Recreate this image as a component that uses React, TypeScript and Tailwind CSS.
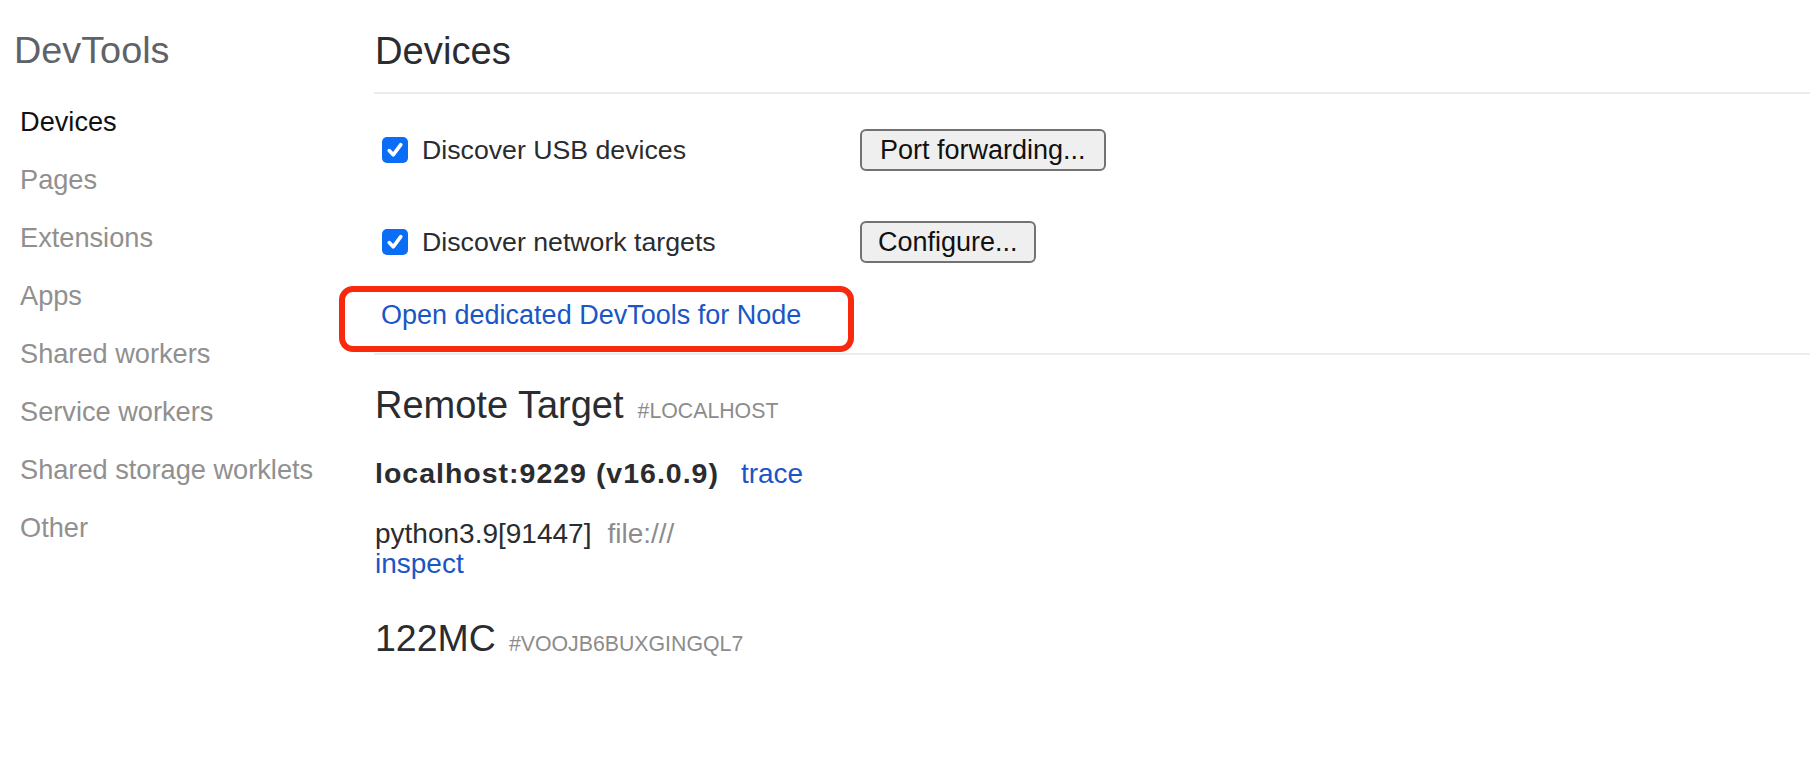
import React from "react";

function Check() {
  return (
    <span className="flex h-[26px] w-[26px] shrink-0 items-center justify-center rounded-[5px] bg-[#0b6cf5]">
      <svg width="26" height="26" viewBox="0 0 26 26" fill="none">
        <path d="M7.2 13.6 L11.2 17.8 L18.8 7.6" stroke="#ffffff" strokeWidth="3.6" strokeLinecap="round" strokeLinejoin="round" />
      </svg>
    </span>
  );
}

function Btn({ children, px }: { children: React.ReactNode; px: string }) {
  return (
    <button className={"flex h-[42px] items-center rounded-[6px] border-2 border-[#727272] bg-[#efefef] text-[27px] leading-none text-[#111111] " + px}>
      {children}
    </button>
  );
}

const sideItems = [
  "Devices",
  "Pages",
  "Extensions",
  "Apps",
  "Shared workers",
  "Service workers",
  "Shared storage worklets",
  "Other",
];

export default function App() {
  return (
    <div
      className="flex h-[774px] w-full overflow-hidden bg-white"
      style={{ fontFamily: '"Liberation Sans", Arial, sans-serif' }}
    >
      <aside className="w-[374px] shrink-0">
        <div className="ml-[14px] mt-[28px] text-[37.8px] leading-[44px] text-[#5f6368]">DevTools</div>
        <ul className="ml-[20px] mt-[21px]">
          {sideItems.map((s, i) => (
            <li
              key={s}
              className={
                "text-[27.2px] leading-[58px] " + (i === 0 ? "text-[#111111]" : "text-[#909090]")
              }
            >
              {s}
            </li>
          ))}
        </ul>
      </aside>

      <main className="flex-1">
        <div className="ml-[1px] mt-[29px] text-[38.2px] leading-[44px] text-[#2a2c2f]">Devices</div>
        <div className="mt-[19px] h-[2px] bg-[#ececec]" />

        <div className="mt-[35px] flex h-[42px] items-center">
          <div className="ml-[8px] flex w-[478px] items-center gap-[14px]">
            <Check />
            <span className="text-[26.7px] leading-none text-[#2a2c2f]">Discover USB devices</span>
          </div>
          <Btn px="px-[18px]">Port forwarding...</Btn>
        </div>

        <div className="mt-[50px] flex h-[42px] items-center">
          <div className="ml-[8px] flex w-[478px] items-center gap-[14px]">
            <Check />
            <span className="text-[26.7px] leading-none text-[#2a2c2f]">Discover network targets</span>
          </div>
          <Btn px="px-[16px]">Configure...</Btn>
        </div>

        <div className="relative ml-[7px] mt-[32px] text-[27px] leading-[40px] text-[#1a56c5]">
          <span>Open dedicated DevTools for Node</span>
          <div className="absolute left-[-42px] top-[-9px] h-[66px] w-[515px] rounded-[14px] border-[6px] border-[#f8290c]" />
        </div>

        <div className="mt-[18px] h-[2px] bg-[#ececec]" />

        <div className="ml-[1px] mt-[28px] flex items-baseline gap-[14px] leading-[44px]">
          <span className="text-[38px] text-[#2a2c2f]">Remote Target</span>
          <span className="text-[21.3px] text-[#8c8c8c]">#LOCALHOST</span>
        </div>

        <div className="ml-[1px] mt-[22px] flex items-baseline leading-[36px]">
          <span className="text-[28.5px] font-bold tracking-[0.035em] text-[#2a2c2f]">localhost:9229 (v16.0.9)</span>
          <span className="ml-[22px] text-[28px] text-[#1a56c5]">trace</span>
        </div>

        <div className="ml-[1px] mt-[28px] flex items-baseline leading-[28px]">
          <span className="text-[28px] text-[#2a2c2f]">python3.9[91447]</span>
          <span className="ml-[16px] text-[28px] text-[#8c8c8c]">file:///</span>
        </div>
        <div className="ml-[1px] mt-[2px] text-[28px] leading-[28px] text-[#1a56c5]">inspect</div>

        <div className="ml-[1px] mt-[38px] flex items-baseline gap-[13px] leading-[44px]">
          <span className="text-[37.5px] text-[#2a2c2f]">122MC</span>
          <span className="text-[21.3px] text-[#8c8c8c]">#VOOJB6BUXGINGQL7</span>
        </div>
      </main>
    </div>
  );
}
